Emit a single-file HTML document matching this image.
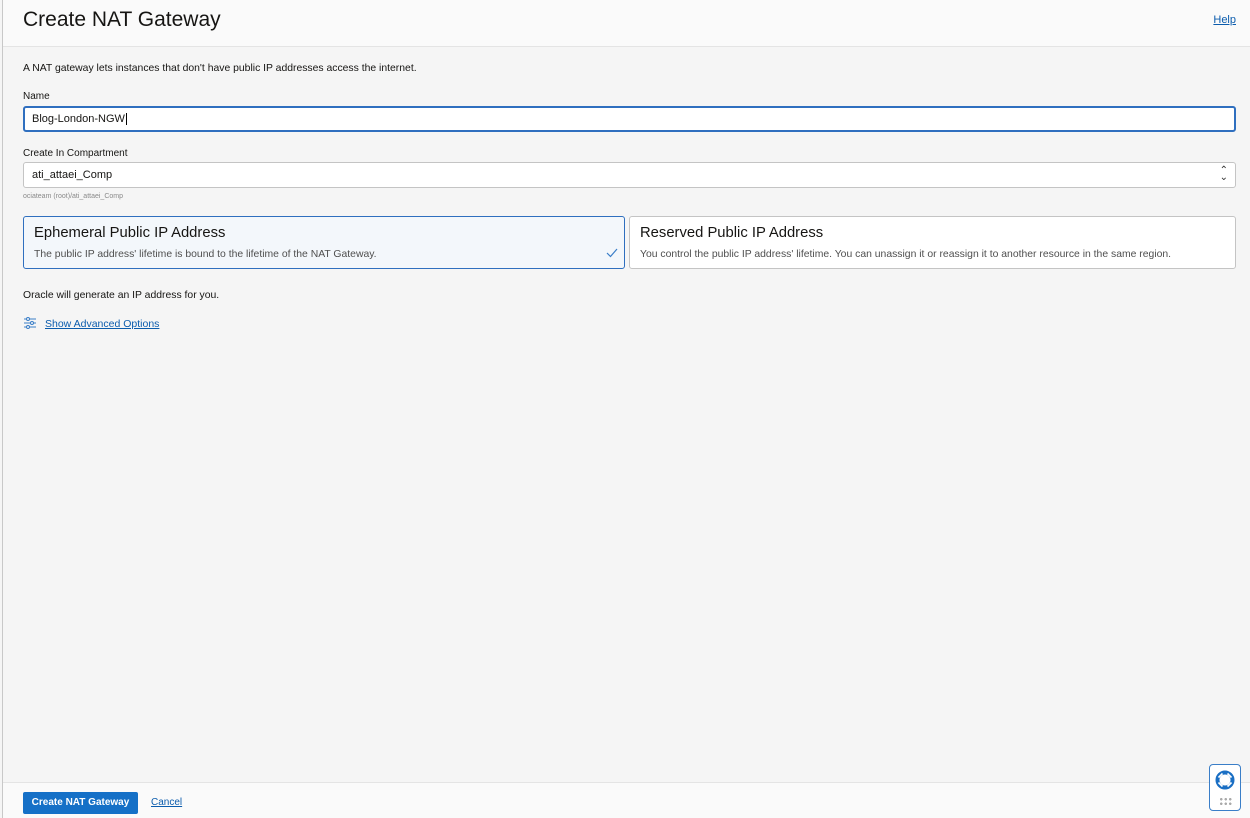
<!DOCTYPE html>
<html><head><style>
*{box-sizing:border-box;margin:0;padding:0}
body{width:1250px;height:818px;overflow:hidden;background:#f5f5f5;font-family:"Liberation Sans",Arial,sans-serif;color:#161513;position:relative;font-size:11px}
.lb{position:absolute;left:0;top:0;width:3px;height:818px;background:#f5f5f5;border-right:1px solid #c8c8c8}
.hd{position:absolute;left:3px;top:0;width:1247px;height:47px;background:#fafafa;border-bottom:1px solid #e4e4e4}
.hd h1{position:absolute;left:20px;top:8px;font-size:21px;font-weight:normal;color:#161513}
.help{position:absolute;right:14px;top:14px;font-size:11px;color:#0b5cad;text-decoration:underline}
.abs{position:absolute}
.lbl{font-size:10px;color:#161513}
.inp{position:absolute;left:23px;width:1213px;height:26px;background:#fff;border:1px solid #c4c4c4;border-radius:3px;padding:6px 8px;font-size:11px}
.card{position:absolute;top:216px;height:53px;background:#fff;border:1px solid #c4c4c4;border-radius:3px;padding:8px 10px}
.card h3{font-size:14.8px;font-weight:normal;margin-bottom:8px}
.card p{font-size:10.4px;color:#4f4f4f}
.ft{position:absolute;left:3px;top:782px;width:1247px;height:36px;background:#fafafa;border-top:1px solid #e4e4e4}
a{color:#0b5cad;text-decoration:underline}
</style></head><body>
<div class="lb"></div>
<div class="hd"><h1>Create NAT Gateway</h1><span class="help">Help</span></div>
<div class="abs" style="left:23px;top:63px;font-size:10.4px">A NAT gateway lets instances that don't have public IP addresses access the internet.</div>
<div class="abs lbl" style="left:23px;top:91px">Name</div>
<div class="inp" style="top:106px;border:2px solid #2f6fbf;padding:5px 7px">Blog-London-NGW<span style="border-left:1px solid #000;margin-left:1px"></span></div>
<div class="abs lbl" style="left:23px;top:148px">Create In Compartment</div>
<div class="inp" style="top:162px">ati_attaei_Comp<span style="position:absolute;right:7px;top:4px;font-size:10px;line-height:7px;color:#333">⌃<br>⌄</span></div>
<div class="abs" style="left:23px;top:193px;font-size:7px;color:#8a8a8a">ociateam (root)/ati_attaei_Comp</div>
<div class="card" style="left:23px;width:602px;border-color:#2f6fbf;background:#f3f7fb"><h3>Ephemeral Public IP Address</h3><p>The public IP address' lifetime is bound to the lifetime of the NAT Gateway.</p>
<svg class="abs" style="right:6px;top:31px" width="12" height="10" viewBox="0 0 12 10"><path d="M1 5 L4.5 8.5 L11 1" fill="none" stroke="#3a7ec8" stroke-width="1.2"/></svg></div>
<div class="card" style="left:629px;width:607px"><h3>Reserved Public IP Address</h3><p>You control the public IP address' lifetime. You can unassign it or reassign it to another resource in the same region.</p></div>
<div class="abs" style="left:23px;top:290px;font-size:10.4px">Oracle will generate an IP address for you.</div>
<svg class="abs" style="left:23px;top:317px" width="14" height="12" viewBox="0 0 14 12" fill="none" stroke="#3a7ec8" stroke-width="1"><path d="M1 2h12M1 6h12M1 10h12"/><circle cx="5" cy="2" r="1.5" fill="#f5f5f5"/><circle cx="9" cy="6" r="1.5" fill="#f5f5f5"/><circle cx="5" cy="10" r="1.5" fill="#f5f5f5"/></svg>
<a class="abs" style="left:45px;top:318px;font-size:10.5px">Show Advanced Options</a>
<div class="ft">
<div class="abs" style="left:20px;top:9px;width:115px;height:22px;background:#1570c7;border-radius:2px;color:#fff;font-size:10px;font-weight:bold;text-align:center;line-height:22px">Create NAT Gateway</div>
<a class="abs" style="left:148px;top:14px;font-size:10px">Cancel</a>
</div>
<div class="abs" style="left:1209px;top:764px;width:32px;height:47px;background:#fff;border:1px solid #3a7ec8;border-radius:4px">
<svg class="abs" style="left:4px;top:4px" width="22" height="22" viewBox="0 0 22 22"><circle cx="11" cy="11" r="7.5" fill="none" stroke="#1a6fc4" stroke-width="4"/><path d="M4.5 8.5L8.5 4.5M13.5 4.5L17.5 8.5M4.5 13.5L8.5 17.5M13.5 17.5L17.5 13.5" stroke="#fff" stroke-width="1.6"/></svg>
<div class="abs" style="left:9px;top:32px;width:13px;height:9px;background:radial-gradient(circle,#aaa 1.2px,transparent 1.4px) 0 0/4.5px 4.5px"></div>
</div>
</body></html>
